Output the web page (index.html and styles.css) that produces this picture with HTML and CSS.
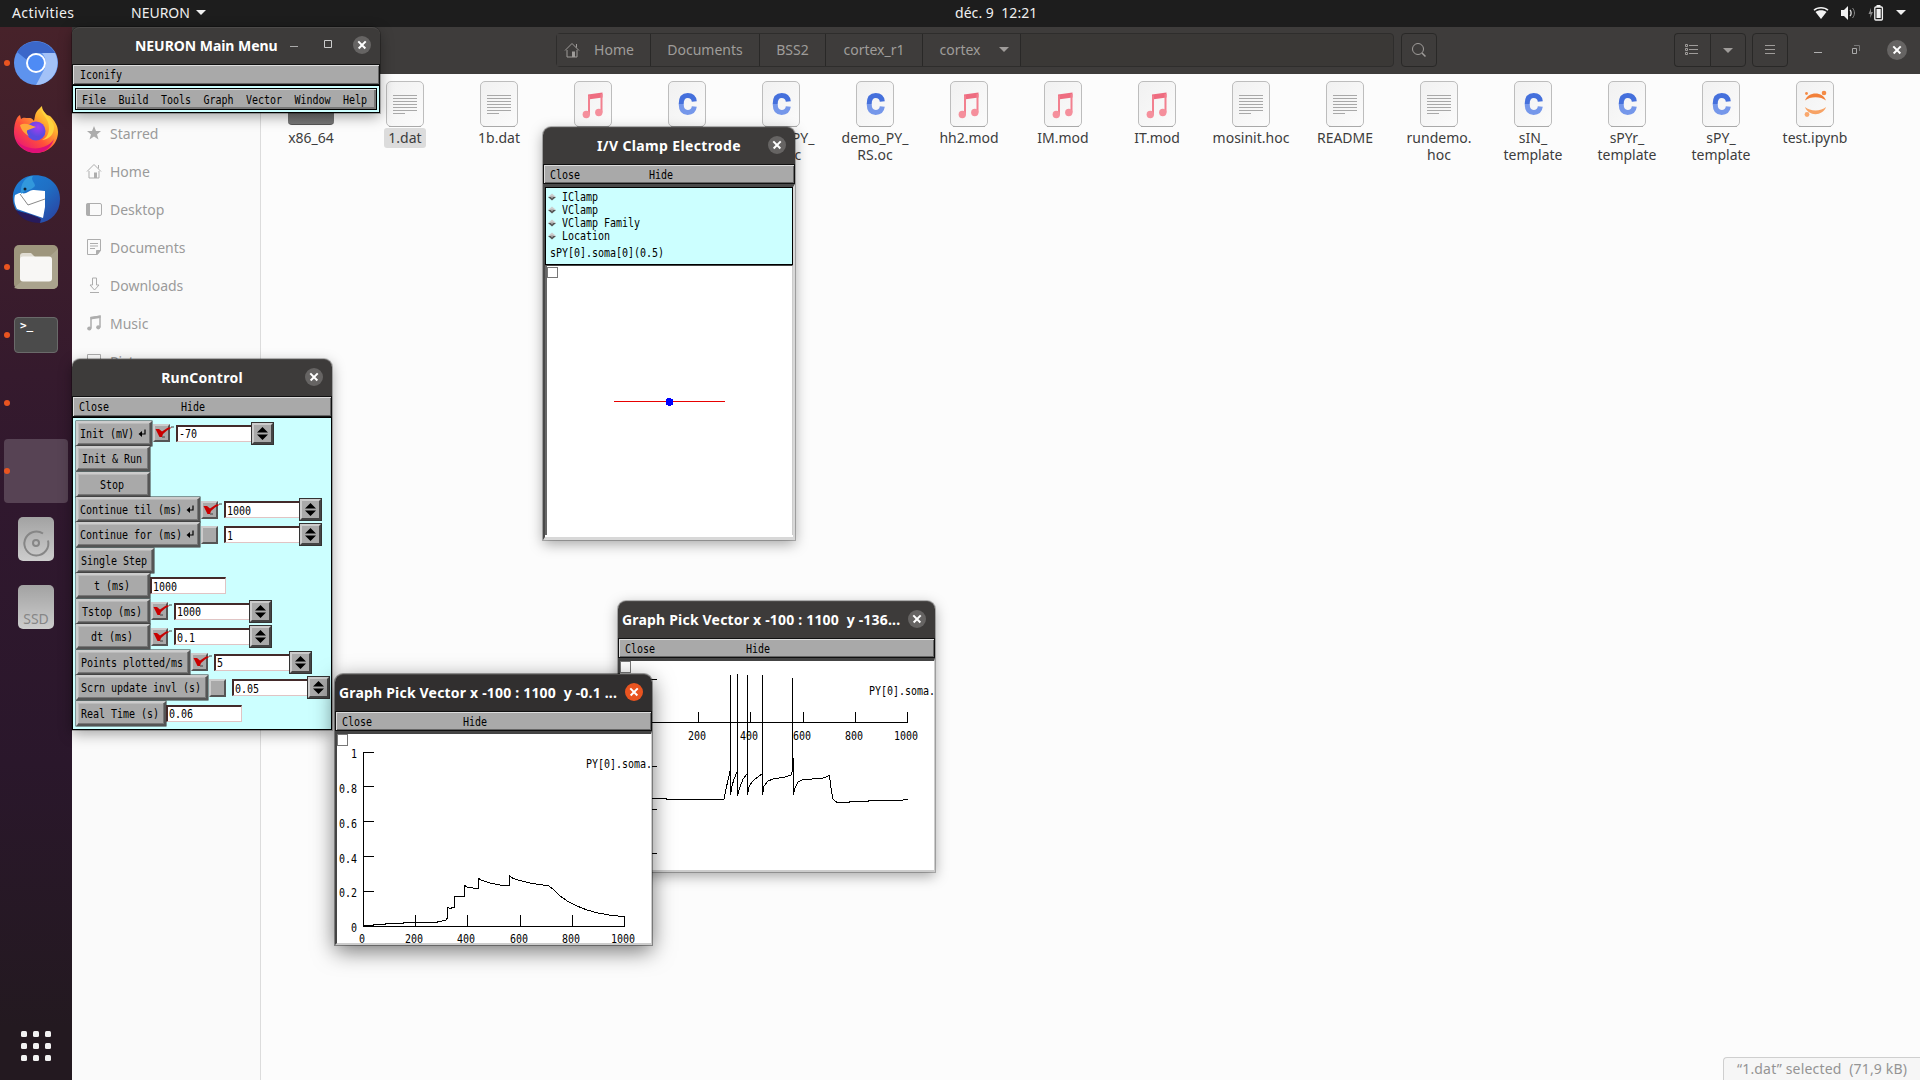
FILE: index.html
```html
<!DOCTYPE html>
<html lang="en">
<head>
<meta charset="utf-8">
<title>Desktop</title>
<link rel="stylesheet" href="styles.css">
</head>
<body>
<svg class="defs" width="0" height="0" aria-hidden="true">
  <defs>
    <linearGradient id="paper" x1="0" y1="0" x2="1" y2="1"><stop offset="0" stop-color="#f1f1f1"/><stop offset="1" stop-color="#fbfbfb"/></linearGradient>
    <linearGradient id="disk" x1="0" y1="0" x2="0" y2="1"><stop offset="0" stop-color="#a2a2a2"/><stop offset="1" stop-color="#cdcdcd"/></linearGradient>
    <linearGradient id="fox" x1="1" y1="0" x2=".2" y2="1"><stop offset="0" stop-color="#fff44f"/><stop offset=".35" stop-color="#ffb02e"/><stop offset=".65" stop-color="#ff4f3a"/><stop offset="1" stop-color="#e8127a"/></linearGradient>
    <radialGradient id="globe" cx=".6" cy=".3"><stop offset="0" stop-color="#a63df0"/><stop offset="1" stop-color="#5a4be0"/></radialGradient>
    <linearGradient id="bird" x1="0" y1="0" x2="1" y2="1"><stop offset="0" stop-color="#1d7fd8"/><stop offset=".5" stop-color="#1f6fc4"/><stop offset="1" stop-color="#2c3c9c"/></linearGradient>
    <symbol id="page" viewBox="0 0 40 48"><rect x="1.5" y="1.5" width="37" height="45" rx="4.5" fill="url(#paper)" stroke="#bdbdbd"/><path d="M4 46.5h32" stroke="#a9a9a9"/></symbol>
    <symbol id="f-text" viewBox="0 0 40 48"><use href="#page"/><path d="M8 15.5h24M8 18.5h24M8 21.5h24M8 24.500h24M8 27.500h24M8 30.500h24M8 33.500h12" stroke="#a8a8a8"/></symbol>
    <symbol id="f-music" viewBox="0 0 40 48"><use href="#page"/><path d="M15 14.500 29.500 12.500v5L15 19.500z" fill="#ee6c80"/><path d="M15 15.500h2v19h-2zM27.500 14h2v18.500h-2z" fill="#f2808f"/><circle cx="13.300" cy="34.500" r="3.700" fill="#f58f9c"/><circle cx="25.800" cy="32.500" r="3.700" fill="#f58f9c"/></symbol>
    <symbol id="f-c" viewBox="0 0 40 48"><use href="#page"/><path d="M27.300 21.500C26.800 17.700 24.200 15.600 20.700 15.600c-4.400 0-6.500 3.200-6.500 8.400" fill="none" stroke="#4570dc" stroke-width="5"/><path d="M14.200 24c0 5.200 2.100 8.400 6.500 8.400 3.500 0 6.100-2.100 6.600-5.900" fill="none" stroke="#7597ea" stroke-width="5"/></symbol>
    <symbol id="f-jup" viewBox="0 0 40 48"><use href="#page"/><path d="M10 20.500c3-9.500 18-9.500 21 0-5-4.500-16-4.500-21 0z" fill="#f2803a"/><path d="M10 27c3 9.500 18 9.500 21 0-5 4.500-16 4.500-21 0z" fill="#f7a264"/><circle cx="29" cy="13" r="2.300" fill="#f48a45"/><circle cx="11.500" cy="13.500" r="1.400" fill="#f48a45"/><circle cx="12" cy="34.500" r="2.400" fill="#f9a86e"/></symbol>
    <symbol id="home" viewBox="0 0 16 16"><path d="M1 8.500 8 1.500l7 7M3 8v7h10V8M12.500 2v3.500" fill="none" stroke="currentColor"/><path d="M8 9.500h3V15H8z" fill="currentColor"/></symbol>
    <symbol id="note" viewBox="0 0 16 16"><path d="M5 3 14 1.200v11M5 2v11.500" fill="none" stroke="currentColor" stroke-width="1.500"/><path d="M4.500 1.800 14.500 .5V3L4.500 4.500z" fill="currentColor"/><circle cx="3.300" cy="13.500" r="2.100" fill="currentColor"/><circle cx="12.300" cy="12.300" r="2.100" fill="currentColor"/></symbol>
    <symbol id="ret" viewBox="0 0 8 9"><path d="M7 .5v4.500H2" fill="none" stroke="#000" stroke-width="1.200"/><path d="M4 2v6L.5 5z"/></symbol>
    <symbol id="tick" viewBox="0 0 20 14"><path d="M1.500 4h3.500l3 2.500L14 2.500h4l-5 3-4 3.500-1 3H5.500z" fill="#c80000"/><path d="M8 12h3M17 2h3" stroke="#444"/></symbol>
    <symbol id="spin" viewBox="0 0 11 13"><path d="M5.500 0 11 5.500H0zM5.500 13 11 7.500H0z"/></symbol>
    <symbol id="dia" viewBox="0 0 8 8"><path d="M0 4 4 .5 8 4z" fill="#ccc"/><path d="M0 4h8L4 7.500z" fill="#555"/><path d="M2 3.300h4L4 5.500z" fill="#aaa"/></symbol>
  </defs>
</svg>

<div class="desktop">
  <header class="topbar">
    <span class="activities">Activities</span>
    <span class="appname">NEURON</span><i class="tri"></i>
    <span class="clock">déc. 9&nbsp; 12:21</span>
    <span class="tray">
      <svg width="16" height="13" viewBox="0 0 16 13"><path d="M8 13 2.500 6C5 3.800 11 3.800 13.500 6z" fill="#f2f2f2"/><path d="M1 4.300C4.500.8 11.500.8 15 4.300" fill="none" stroke="#f2f2f2" stroke-width="1.500"/></svg>
      <svg width="15" height="14" viewBox="0 0 15 14"><path d="M0 4h3l4-4v14l-4-4H0z" fill="#f2f2f2"/><path d="M9 4c1.500 1.500 1.500 4.500 0 6" fill="none" stroke="#ddd" stroke-width="1.300"/><path d="M11.500 2c2.600 3 2.600 7 0 10" fill="none" stroke="#888"/></svg>
      <svg width="16" height="16" viewBox="0 0 16 16"><path d="M3 3 .5 9h2L2 13l3-6H3z" fill="#888"/><rect x="6.800" y="2" width="7.600" height="13" rx="1" fill="none" stroke="#f2f2f2" stroke-width="1.300"/><path d="M8.500 4h4.200v9H8.500zM8.500 0h4v2h-4z" fill="#f2f2f2"/></svg>
      <i class="tri"></i>
    </span>
  </header>

  <div class="main">
    <nav class="dock">
      <div class="app run"><svg width="44" height="44" viewBox="0 0 44 44"><circle cx="22" cy="22" r="22" fill="#5e93ee"/><path d="M3 11a22 22 0 0 1 38 1H22a10 10 0 0 0-9 7z" fill="#3b67c9"/><path d="M41 12a22 22 0 0 1-19 32l9-17c2-5 1-10-3-15z" fill="#a3c2f8"/><circle cx="22" cy="22" r="10" fill="#fff"/><circle cx="22" cy="22" r="8" fill="#4e8bf5"/></svg></div>
      <div class="app fx"><svg width="46" height="47" viewBox="0 0 46 47"><path d="M4 12c1-2 3-3 3-3l1 4c2-2 5-1 7-1 0 0 4-1 6 3L22 10c1-5 4-7 7-10 0 4 3 7 5 9l3 1c4 4 8 9 8 16 0 12-10 21-22 21S1 38 1 26c0-6 1-10 3-14z" fill="url(#fox)"/><path d="M3 33c7 12 30 13 38 0-3 9-10 14-18 14S6 41 3 33z" fill="#df1078"/><circle cx="23" cy="25" r="9.500" fill="url(#globe)"/><path d="M7 19c5-3 10 0 16 2-3 1-5 2-8 3-2 0-1 4 1 6-4-2-8-6-9-11z" fill="#ffa63a"/><path d="M28 2c1 8 8 10 8 20 0 5-2 10-7 12 8-1 12-6 12-13 0-6-6-9-13-19z" fill="#ffd43d"/></svg></div>
      <div class="app"><svg width="48" height="48" viewBox="0 0 48 48"><path d="M8 6C18-3 34 0 40 6c6 5 8 12 8 18 0 14-9 22-20 24L4 35C-2 24 1 12 8 6z" fill="url(#bird)"/><path d="M3 20c3-1 5-3 7-2 4 2 8-4 12-3l11 1v16l-2 11L5 34C2 28 2 24 3 20z" fill="#fff"/><path d="m8 19 8 11 17-6" fill="none" stroke="#555" stroke-width=".7"/><path d="M9 19C8 8 14 1 21 1c-3 4 2 6 2 10-4 5-9 3-14 8z" fill="#3298dc"/><path d="M4 35c7 3 17 4 25 9l-1 4C18 48 8 44 4 35z" fill="#271b5c"/><circle cx="13" cy="14" r="1.500" fill="#123"/></svg></div>
      <div class="app run"><svg width="44" height="44" viewBox="0 0 44 44"><rect width="44" height="44" rx="5" fill="#9e967d"/><path d="M0 43 44 4v35a5 5 0 0 1-5 5H5z" fill="#aaa38d"/><path d="M6 11a3 3 0 0 1 3-3h8l4 4v4H6z" fill="#e0dcd2"/><rect x="6" y="11.500" width="32" height="25" rx="3" fill="#f8f7f5"/></svg></div>
      <div class="app run"><div class="term">&gt;_</div></div>
      <div class="app run"></div>
      <div class="app run active"></div>
      <div class="app"><svg width="36" height="44" viewBox="0 0 36 44"><rect width="36" height="44" rx="5" fill="url(#disk)"/><path d="M25 16.500a12 12 0 1 0 5 7" fill="none" stroke="#868686" stroke-width="2"/><circle cx="18" cy="26" r="3" fill="none" stroke="#868686" stroke-width="2"/></svg></div>
      <div class="app"><div class="ssd">SSD</div></div>
      <svg class="grid" width="30" height="30" viewBox="0 0 30 30" fill="#f2f2f2"><rect width="6" height="6" rx="1.500"/><rect x="12" width="6" height="6" rx="1.500"/><rect x="24" width="6" height="6" rx="1.500"/><rect y="12" width="6" height="6" rx="1.500"/><rect x="12" y="12" width="6" height="6" rx="1.500"/><rect x="24" y="12" width="6" height="6" rx="1.500"/><rect y="24" width="6" height="6" rx="1.500"/><rect x="12" y="24" width="6" height="6" rx="1.500"/><rect x="24" y="24" width="6" height="6" rx="1.500"/></svg>
    </nav>

    <section class="files">
      <div class="fbar">
        <div class="path">
          <span class="crumb c1"><svg width="16" height="16"><use href="#home"/></svg>Home</span><span class="crumb c2">Documents</span><span class="crumb c3">BSS2</span><span class="crumb c4">cortex_r1</span><span class="crumb c5">cortex<i class="tri"></i></span>
        </div>
        <div class="btn search"><svg width="16" height="16" viewBox="0 0 16 16" fill="none" stroke="currentColor"><circle cx="7" cy="7" r="5.500"/><path d="m11 11 3.500 3.500" stroke-width="1.500"/></svg></div>
        <div class="btn list"><svg width="14" height="12" viewBox="0 0 14 12" fill="none" stroke="currentColor"><path d="M.5.500h2v2h-2zM.5 4.500h2v2h-2zM.5 8.500h2v2h-2zM4 1.500h9M4 5.500h9M4 9.500h9"/></svg></div>
        <div class="btn drop"><i class="tri"></i></div>
        <div class="btn burger"><svg width="12" height="12" viewBox="0 0 12 12" stroke="currentColor"><path d="M1 1.500h10M1 5.500h10M1 9.500h10"/></svg></div>
        <svg class="wmin" width="8" height="10"><path d="M0 7.500h8" stroke="#b0b0b0"/></svg>
        <svg class="wres" width="10" height="10" fill="none"><path d="M1.500 3.500h4v5h-4z" stroke="#aaa"/><path d="M3 .5h5.500V6" stroke="#777"/></svg>
        <span class="x big"></span>
      </div>
      <div class="fbody">
        <aside class="side">
          <div class="place"><svg width="16" height="16"><path d="m8 1 2 5h5l-4 3.500 1.500 5L8 11.500 3.500 14.500 5 9.500 1 6h5z" fill="currentColor"/></svg>Starred</div>
          <div class="place"><svg width="16" height="16"><use href="#home"/></svg>Home</div>
          <div class="place"><svg width="16" height="16"><rect x=".5" y="2.500" width="15" height="12" rx="1.500" fill="none" stroke="currentColor"/><path d="M.5 2.500h3.500v12H.5z" fill="currentColor"/></svg>Desktop</div>
          <div class="place"><svg width="16" height="16" fill="none" stroke="currentColor"><path d="M1.500.500h13v11l-3 4h-10zM4 4.500h8M4 7h8M4 9.500h5"/><path d="M10.500 11.500h4l-4 4z" fill="currentColor"/></svg>Documents</div>
          <div class="place"><svg width="16" height="16" fill="none" stroke="currentColor"><path d="M6.500 1h4v7H13l-4.500 5L4 8h2.500zM4 15.500h9"/></svg>Downloads</div>
          <div class="place"><svg width="16" height="16"><use href="#note"/></svg>Music</div>
          <div class="place"><svg width="16" height="16" fill="none" stroke="currentColor"><path d="M1.500 1.500h13v13h-13zM2 12l4-5 4 4 3-3"/></svg>Pictures</div>
        </aside>
        <div class="icons">
          <div class="file"><div class="folder"></div><b>x86_64</b></div>
          <div class="file sel"><svg><use href="#f-text"/></svg><b>1.dat</b></div>
          <div class="file"><svg><use href="#f-text"/></svg><b>1b.dat</b></div>
          <div class="file"><svg><use href="#f-music"/></svg></div>
          <div class="file"><svg><use href="#f-c"/></svg></div>
          <div class="file"><svg><use href="#f-c"/></svg><b>demo_PY_<br>IBS.oc</b></div>
          <div class="file"><svg><use href="#f-c"/></svg><b>demo_PY_<br>RS.oc</b></div>
          <div class="file"><svg><use href="#f-music"/></svg><b>hh2.mod</b></div>
          <div class="file"><svg><use href="#f-music"/></svg><b>IM.mod</b></div>
          <div class="file"><svg><use href="#f-music"/></svg><b>IT.mod</b></div>
          <div class="file"><svg><use href="#f-text"/></svg><b>mosinit.hoc</b></div>
          <div class="file"><svg><use href="#f-text"/></svg><b>README</b></div>
          <div class="file"><svg><use href="#f-text"/></svg><b>rundemo.<br>hoc</b></div>
          <div class="file"><svg><use href="#f-c"/></svg><b>sIN_<br>template</b></div>
          <div class="file"><svg><use href="#f-c"/></svg><b>sPYr_<br>template</b></div>
          <div class="file"><svg><use href="#f-c"/></svg><b>sPY_<br>template</b></div>
          <div class="file"><svg><use href="#f-jup"/></svg><b>test.ipynb</b></div>
        </div>
        <div class="status">“1.dat” selected&nbsp; (71,9 kB)</div>
      </div>
    </section>
  </div>

  <section class="win w-main">
    <div class="title"><span class="name">NEURON Main Menu</span><svg class="mm" width="44" height="12" fill="none"><path d="M0 7.500h8" stroke="#aaa"/><path d="M34.500 1.500h7v7h-7z" stroke="#ccc"/></svg><span class="x"></span></div>
    <div class="bar"><span class="m">Iconify</span></div>
    <div class="menuwrap"><div class="menu"><span class="m">File</span><span class="m">Build</span><span class="m">Tools</span><span class="m">Graph</span><span class="m">Vector</span><span class="m">Window</span><span class="m">Help</span></div></div>
  </section>

  <section class="win w-iv">
    <div class="title"><span class="name">I/V Clamp Electrode</span><span class="x"></span></div>
    <div class="bar"><span class="m">Close</span><span class="m hide">Hide</span></div>
    <div class="ivbody">
      <div class="panel">
        <div class="opt"><svg width="8" height="8"><use href="#dia"/></svg><span class="m">IClamp</span></div>
        <div class="opt"><svg width="8" height="8"><use href="#dia"/></svg><span class="m">VClamp</span></div>
        <div class="opt"><svg width="8" height="8"><use href="#dia"/></svg><span class="m">VClamp Family</span></div>
        <div class="opt"><svg width="8" height="8"><use href="#dia"/></svg><span class="m">Location</span></div>
        <div class="loc"><span class="m">sPY[0].soma[0](0.5)</span></div>
      </div>
      <svg class="canvas" width="245" height="270" shape-rendering="crispEdges"><rect x=".5" y="1.500" width="10" height="10" fill="#fff" stroke="#777"/><path d="M67 135.500h111" stroke="#e80000"/><circle cx="122.500" cy="136" r="3.900" fill="#00f"/></svg>
    </div>
  </section>

  <section class="win w-run">
    <div class="title"><span class="name">RunControl</span><span class="x"></span></div>
    <div class="bar"><span class="m">Close</span><span class="m hide">Hide</span></div>
    <div class="runbody">
      <div class="row"><div class="pb b1"><span class="m">Init (mV)</span><svg width="8" height="9"><use href="#ret"/></svg></div><div class="cb"><svg width="20" height="14"><use href="#tick"/></svg></div><div class="fd"><span class="m">-70</span></div><div class="sp"><svg width="11" height="13"><use href="#spin"/></svg></div></div>
      <div class="row"><div class="pb b0"><span class="m">Init &amp; Run</span></div></div>
      <div class="row"><div class="pb b0"><span class="m">Stop</span></div></div>
      <div class="row"><div class="pb b2"><span class="m">Continue til (ms)</span><svg width="8" height="9"><use href="#ret"/></svg></div><div class="cb"><svg width="20" height="14"><use href="#tick"/></svg></div><div class="fd"><span class="m">1000</span></div><div class="sp"><svg width="11" height="13"><use href="#spin"/></svg></div></div>
      <div class="row"><div class="pb b2"><span class="m">Continue for (ms)</span><svg width="8" height="9"><use href="#ret"/></svg></div><div class="cb"></div><div class="fd"><span class="m">1</span></div><div class="sp"><svg width="11" height="13"><use href="#spin"/></svg></div></div>
      <div class="row"><div class="pb b3"><span class="m">Single Step</span></div></div>
      <div class="row"><div class="pb b0"><span class="m">t (ms)</span></div><div class="fd"><span class="m">1000</span></div></div>
      <div class="row"><div class="pb b0"><span class="m">Tstop (ms)</span></div><div class="cb"><svg width="20" height="14"><use href="#tick"/></svg></div><div class="fd"><span class="m">1000</span></div><div class="sp"><svg width="11" height="13"><use href="#spin"/></svg></div></div>
      <div class="row"><div class="pb b0"><span class="m">dt (ms)</span></div><div class="cb"><svg width="20" height="14"><use href="#tick"/></svg></div><div class="fd"><span class="m">0.1</span></div><div class="sp"><svg width="11" height="13"><use href="#spin"/></svg></div></div>
      <div class="row"><div class="pb b4"><span class="m">Points plotted/ms</span></div><div class="cb"><svg width="20" height="14"><use href="#tick"/></svg></div><div class="fd"><span class="m">5</span></div><div class="sp"><svg width="11" height="13"><use href="#spin"/></svg></div></div>
      <div class="row"><div class="pb b5"><span class="m">Scrn update invl (s)</span></div><div class="cb"></div><div class="fd"><span class="m">0.05</span></div><div class="sp"><svg width="11" height="13"><use href="#spin"/></svg></div></div>
      <div class="row"><div class="pb b6"><span class="m">Real Time (s)</span></div><div class="fd"><span class="m">0.06</span></div></div>
    </div>
  </section>

  <section class="win graph w-g2">
    <div class="title"><span class="name">Graph Pick Vector x -100 : 1100&nbsp; y -136...</span><span class="x"></span></div>
    <div class="bar"><span class="m">Close</span><span class="m hide">Hide</span></div>
    <div class="plot"><svg width="314" height="209" viewBox="620 661 314 209">
      <g fill="none" stroke="#000" shape-rendering="crispEdges">
        <rect x="620.500" y="661.500" width="10" height="11" stroke="#777"/>
        <path d="M646 722.500H907.500V712M698.500 722v-10M750.500 722v-10M803.500 722v-10M855.500 722v-10M646 679.500h11M646 766.500h11M646 809.500h11M646 853.500h11"/>
        <path d="M646 798.500H666V799.500H724L726 789 729 776 730.500 768V675M730.500 722V794.500L732 786 734 779 737.500 771V674M737.500 722V795.500L740 787 743 779 747 774 747.500 759V675M747.500 722V794.500L749 787 752 782 755 779 762 774V675M762.500 722V794.500L764 786 768 781 773 779 785 777 791 775 792.500 771V678M793.500 758V794.500L795 788 798 782 803 779.500 822 778.500 829.500 775.500 831 788 833 799 837 802.500H849V801.500H868V800.500H902L904 799.500H908"/>
      </g>
      <g class="t"><text x="688" y="740">200</text><text x="740" y="740">400</text><text x="793" y="740">600</text><text x="845" y="740">800</text><text x="894" y="740">1000</text><text x="869" y="695">PY[0].soma.</text></g>
    </svg></div>
  </section>

  <section class="win graph w-g1">
    <div class="title"><span class="name">Graph Pick Vector x -100 : 1100&nbsp; y -0.1 ...</span><span class="x"></span></div>
    <div class="bar"><span class="m">Close</span><span class="m hide">Hide</span></div>
    <div class="plot"><svg width="314" height="209" viewBox="337 734 314 209">
      <g fill="none" stroke="#000" shape-rendering="crispEdges">
        <rect x="337.500" y="734.500" width="10" height="11" stroke="#777"/>
        <path d="M374 752.500H363.500V926.500H624.500V915.500M363 786.500h11M363 821.500h11M363 856.500h11M363 891.500h11M415.500 926v-11M467.500 926v-11M520.500 926v-11M572.500 926v-11"/>
        <path d="M364 925.500H373V924.500H385V923.500H403V922.500H437L438 921.500 445.500 920.500 447.500 918V907.500L450 908.500 454.500 907V896.500H464.500V885.500L468 887.500 478.500 888.500V878.500L482 880.500 490 883 502 885.500H509.500V875.500L513 878.500 520 880.500 530 883 549 886 554 890 560 896 568 901.500 577 906 587 910 598 913 612 915.500 624 916.500"/>
      </g>
      <g class="t"><text x="351" y="758">1</text><text x="339" y="793">0.8</text><text x="339" y="828">0.6</text><text x="339" y="863">0.4</text><text x="339" y="897">0.2</text><text x="351" y="932">0</text><text x="359" y="943.500">0</text><text x="405" y="943.500">200</text><text x="457" y="943.500">400</text><text x="510" y="943.500">600</text><text x="562" y="943.500">800</text><text x="611" y="943.500">1000</text><text x="586" y="768">PY[0].soma.</text></g>
    </svg></div>
  </section>
</div>
</body>
</html>
```
FILE: styles.css
```css
* { box-sizing: border-box; }
body { margin: 0; font: 14px/17px "Noto Sans", "Open Sans", sans-serif; letter-spacing: 0; overflow: hidden; }
svg { display: block; flex: none; }
.defs { position: absolute; }
.desktop { position: relative; width: 1920px; height: 1080px; display: flex; flex-direction: column; overflow: hidden; }
.tri { width: 0; height: 0; border: 5px solid transparent; border-top-color: currentColor; border-bottom: 0; }

/* top bar */
.topbar { height: 27px; flex: none; background: #1d1d1d; color: #f0f0f0; display: flex; align-items: center; padding: 0 14px 2px 12px; }
.activities { width: 119px; letter-spacing: .4px; }
.appname { width: 65px; }
.clock { margin-left: 749px; width: 90px; white-space: nowrap; letter-spacing: .050px; }
.tray { margin-left: auto; display: flex; align-items: center; gap: 12px; }

.main { flex: 1; display: flex; min-height: 0; }

/* dock */
.dock { width: 72px; flex: none; display: flex; flex-direction: column; align-items: center; gap: 4px; padding-top: 4px; background: linear-gradient(#47222a, #351a2d 33%, #30182e 45%, #2a172b 70%, #231920 95%); }
.app { position: relative; width: 64px; height: 64px; display: flex; align-items: center; justify-content: center; border-radius: 4px; }
.fx { padding-bottom: 3px; }
.run::before { content: ""; position: absolute; left: 0; top: 29px; width: 6px; height: 6px; border-radius: 50%; background: #e95420; }
.active { background: #574354; }
.term { width: 44px; height: 36px; border-radius: 4px; background: #4b4b4b; border: 1px solid #6a6a6a; color: #fff; font: bold 11px/15px "DejaVu Sans Mono", monospace; padding-left: 5px; }
.ssd { width: 36px; height: 44px; border-radius: 5px; background: linear-gradient(#a2a2a2, #cdcdcd); color: #868686; font-size: 14px; line-height: 67px; text-align: center; }
.grid { margin-top: auto; margin-bottom: 19px; }

/* file manager */
.files { flex: 1; display: flex; flex-direction: column; min-width: 0; }
.fbar { height: 47px; flex: none; background: #3e3c3b; color: #9f9c9a; display: flex; align-items: center; padding: 0 13px 1px 484px; }
.path { display: flex; width: 838px; flex: none; height: 34px; border: 1px solid #2e2d2c; border-radius: 4px; background: #3a3836; }
.crumb { display: flex; align-items: center; justify-content: center; border-right: 1px solid #292827; background: #3e3c3b; padding-bottom: 1px; flex: none; }
.c1 { width: 94px; gap: 14px; padding-right: 9px; }
.c2 { width: 109px; }
.c3 { width: 66px; }
.c4 { width: 97px; }
.c5 { width: 98px; gap: 18px; padding-left: 5px; }
.btn { width: 36px; flex: none; height: 34px; border: 1px solid #292827; border-radius: 4px; display: flex; align-items: center; justify-content: center; }
.search { margin-left: 7px; }
.list { margin-left: auto; border-radius: 4px 0 0 4px; border-right: 0; }
.drop { border-radius: 0 4px 4px 0; }
.burger { margin-left: 6px; }
.wmin { margin-left: 26px; }
.wres { margin-left: 31px; }
.fbody { position: relative; flex: 1; display: flex; background: #fcfcfc; min-height: 0; }
.side { width: 189px; flex: none; background: #fafafa; border-right: 1px solid #dcdcdc; color: #9a9a9a; padding: 40px 0 0 14px; }
.place { display: flex; align-items: center; gap: 8px; height: 38px; }
.place svg { color: #adadad; }
.icons { display: flex; align-items: flex-start; padding: 6px 0 0 3px; color: #3d3d3d; }
.file { width: 94px; flex: none; display: flex; flex-direction: column; align-items: center; text-align: center; }
.file svg { width: 40px; height: 48px; }
.folder { width: 46px; height: 40px; margin: 5px 0 3px; border-radius: 4px; background: linear-gradient(#555, #777); border-bottom: 1px solid #555; }
.file b { font-weight: normal; padding: 1px 4px 2px; border-radius: 3px; }
.sel b { background: #dcdcdc; }
.status { position: absolute; right: 0; bottom: 0; width: 197px; height: 23px; border: 1px solid #cfcfcf; border-width: 1px 0 0 1px; border-radius: 4px 0 0 0; background: #f6f6f6; color: #949494; padding: 2px 0 0 13px; white-space: nowrap; letter-spacing: .180px; }

/* floating windows */
.win { position: absolute; display: flex; flex-direction: column; border-radius: 8px 8px 0 0; box-shadow: 0 0 0 1px rgba(0,0,0,.25), 0 4px 14px rgba(0,0,0,.35); }
.title { height: 37px; flex: none; display: flex; align-items: center; background: #3d3b3a; border-radius: 8px 8px 0 0; border-top: 1px solid #4c4a49; color: #fff; font-weight: bold; padding: 0 9px 2px 0; }
.name { flex: 1; text-align: center; white-space: nowrap; letter-spacing: .190px; }
.x { position: relative; width: 18px; height: 18px; flex: none; border-radius: 50%; background: #666463; display: grid; place-items: center; }
.x::before, .x::after { content: ""; grid-area: 1 / 1; width: 10px; height: 1.500px; background: #fff; transform: rotate(45deg); }
.x::after { transform: rotate(-45deg); }
.big { width: 20px; height: 20px; margin-left: 26px; }
.bar { height: 20px; flex: none; display: flex; align-items: center; background: #a9a9a9; border: 1px solid #111; box-shadow: inset 1px 1px #ddd, inset -1px -1px #666; padding: 1px 0 0 6px; }
.m { display: inline-block; font: 10px/13px "DejaVu Sans Mono", monospace; letter-spacing: -0.020px; color: #000; transform: scaleY(1.2); white-space: pre; }
.bar .m { width: 30px; }

.w-main { left: 72px; top: 27px; width: 308px; height: 86px; }
.w-main .name { padding-left: 63px; text-align: left; flex: none; width: 218px; letter-spacing: -.050px; }
.mm { margin-right: 19px; }
.w-main .bar { padding: 0 0 0 7px; height: 21px; }
.menuwrap { flex: 1; background: #cff; border: 1px solid #000; padding: 2px; }
.menu { height: 100%; border: 1px solid #000; background: #a9a9a9; box-shadow: inset 1px 1px #ddd, inset -2px -2px #777; display: flex; align-items: center; justify-content: space-between; padding: 1px 9px 0 6px; }

.w-iv { left: 543px; top: 127px; width: 252px; height: 413px; }
.w-iv .name { padding-left: 27px; letter-spacing: .350px; }
.w-iv .hide { margin-left: 69px; }
.ivbody { flex: 1; background: #fff; border: 2px solid #4a4a4a; border-width: 3px 2px 3px 2px; border-right-color: #d8d8d8; border-bottom-color: #d8d8d8; }
.panel { height: 78px; width: 248px; background: #cff; border: 1px solid #000; padding: 2px 0 0 2px; }
.opt { height: 13px; display: flex; align-items: center; gap: 6px; }
.loc { padding: 4px 0 0 2px; display: flex; }
.canvas { width: 248px; border-left: 2px solid #666; border-top: 1px solid #444; border-right: 1px solid #ccc; }

.w-run { left: 72px; top: 359px; width: 260px; height: 371px; }
.w-run .name { padding-left: 27px; letter-spacing: .250px; }
.w-run .bar { height: 21px; padding-top: 0; }
.w-run .hide { margin-left: 72px; }
.runbody { flex: 1; background: #cff; border: 1px solid #000; padding: 2.500px 0 0 3px; }
.row { height: 25.450px; display: flex; align-items: center; }
.pb { height: 25px; display: flex; align-items: center; justify-content: center; gap: 4px; padding-right: 2px; background: #a9a9a9; border: 2px solid; border-color: #ccc #555 #555 #ccc; box-shadow: inset -1px -1px #777, inset 1px 1px #bbb, 0 0 0 .5px #333; }
.b0 { width: 74px; } .b1 { width: 76px; } .b2 { width: 124px; } .b3 { width: 78px; } .b4 { width: 114px; } .b5 { width: 132px; } .b6 { width: 90px; }
.cb { width: 17px; height: 18px; margin: 0 6px 0 1px; background: #a9a9a9; border: 2px solid; border-color: #ccc #555 #555 #ccc; }
.cb svg { margin: -1px 0 0 -1px; }
.fd { width: 76px; height: 17px; background: #fff; border: 2px solid; border-color: #432a2a #e0c4c4 #e0c4c4 #432a2a; border-width: 2px 1px 1px 2px; padding-left: 1px; display: flex; align-items: center; }
.sp { width: 21px; height: 21px; background: #a9a9a9; border: 2px solid; border-color: #ccc #444 #444 #ccc; outline: .5px solid #333; display: grid; place-items: center; }

.graph { width: 317px; height: 271px; }
.graph .name { text-align: left; padding-left: 4px; }
.graph .hide { margin-left: 91px; }
.plot { flex: 1; background: #fff; border: solid; border-width: 3px 1px 2px 2px; border-color: #444 #ccc #ccc #444; overflow: hidden; }
.t { font: 10px "DejaVu Sans Mono", monospace; letter-spacing: -0.020px; }
.t text { transform: scaleY(1.2); transform-box: fill-box; transform-origin: 0 80%; }
.w-g2 { left: 618px; top: 601px; }
.w-g1 { left: 335px; top: 674px; box-shadow: 0 0 0 1px rgba(0,0,0,.35), 0 6px 22px rgba(0,0,0,.55); }
.w-g1 .title { background: #312f2f; }
.w-g1 .x { background: #e95420; }

.list, .drop, .burger, .wmin { position: relative; left: 1.500px; }
```
